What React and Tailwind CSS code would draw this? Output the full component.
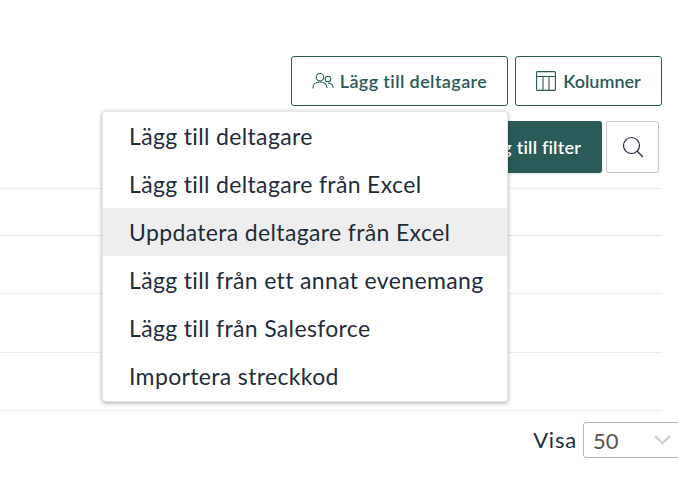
import React from "react";

const items = [
  "Lägg till deltagare",
  "Lägg till deltagare från Excel",
  "Uppdatera deltagare från Excel",
  "Lägg till från ett annat evenemang",
  "Lägg till från Salesforce",
  "Importera streckkod",
];

const Users = () => (
  <svg width="22" height="18" viewBox="0 0 22 18" fill="none" stroke="#2a5b57" strokeWidth="1.1" strokeLinecap="round">
    <circle cx="8" cy="5.2" r="3.7" />
    <path d="M1 16c0-3.8 2.8-6 7-6s6.6 2 7 5.6" />
    <circle cx="16" cy="7" r="2.8" />
    <path d="M16.5 11.2c2.6 0 4.3 1.6 4.6 4.2" />
  </svg>
);

const Columns = () => (
  <svg width="20" height="20" viewBox="0 0 20 20" fill="none" stroke="#2a5b57" strokeWidth="1.1">
    <rect x="0.6" y="0.6" width="18.8" height="18.8" rx="1" />
    <path d="M0.6 5.5h18.8M7 5.5v13.9M13 5.5v13.9" />
  </svg>
);

const Search = () => (
  <svg width="22" height="22" viewBox="0 0 22 22" fill="none" stroke="#1f2d3a" strokeWidth="1.2" strokeLinecap="round">
    <circle cx="9.5" cy="9.5" r="8" />
    <path d="M15.5 15.5l5 5" />
  </svg>
);

const Chevron = () => (
  <svg width="17" height="10" viewBox="0 0 17 10" fill="none" stroke="#d2d2d2" strokeWidth="2.4">
    <path d="M1 1.2l7.5 7 7.5-7" />
  </svg>
);

export default function App() {
  return (
    <div className="relative w-[678px] h-[494px] overflow-hidden bg-white text-[#1f2d3a] font-['Lato','Noto_Sans',sans-serif]">
      <div className="flex justify-end gap-[7px] pt-[56px] pr-[16px]">
        <button className="flex items-center justify-center gap-[6px] w-[217px] h-[50px] rounded-[3px] border border-[#2a5b57] text-[#2a5b57] text-[18px] font-semibold tracking-[0.4px]">
          <Users />
          Lägg till deltagare
        </button>
        <button className="flex items-center justify-center gap-[7px] w-[147px] h-[50px] rounded-[3px] border border-[#2a5b57] text-[#2a5b57] text-[18px] font-semibold">
          <Columns />
          Kolumner
        </button>
      </div>
      <div className="flex justify-end gap-[4px] mt-[15px] pr-[19px]">
        <button className="flex items-center justify-end w-[180px] h-[52px] pr-[21px] rounded-[3px] bg-[#2a5b57] text-white text-[18px] font-semibold tracking-[0.2px] shadow-sm">
          Lägg till filter
        </button>
        <button className="flex items-center justify-center w-[53px] h-[52px] rounded-[3px] border border-[#c4c8cc] bg-white">
          <Search />
        </button>
      </div>
      <div className="mt-[15px] mr-[16px] flex flex-col">
        <div className="h-[1px] bg-[#ececec]" />
        <div className="h-[47px] border-b border-[#e4e4e4]" />
        <div className="h-[58px] border-b border-[#ececec]" />
        <div className="h-[59px] border-b border-[#ececec]" />
        <div className="h-[58px] border-b border-[#ececec]" />
      </div>
      <div className="flex justify-end items-center gap-[6px] mt-[11px] -mr-[6px]">
        <span className="text-[22px] leading-none tracking-[0.8px]">Visa</span>
        <div className="flex items-center justify-between w-[101px] h-[36px] pl-[9px] pr-[12px] rounded-[3px] border border-[#b8b8b8] text-[22px] text-[#555555]">
          50
          <Chevron />
        </div>
      </div>

      <div className="absolute left-[102px] top-[111px] w-[406px] h-[291px] bg-white rounded-[4px] border border-[#e8e8e8] shadow-[0_1px_4px_rgba(0,0,0,0.35)]">
        {items.map((t, i) => (
          <div
            key={t}
            className={`flex items-center h-[48px] pl-[26px] text-[23px] tracking-[0.35px] ${i === 2 ? "bg-[#eeeeee]" : ""}`}
          >
            {t}
          </div>
        ))}
      </div>
    </div>
  );
}
